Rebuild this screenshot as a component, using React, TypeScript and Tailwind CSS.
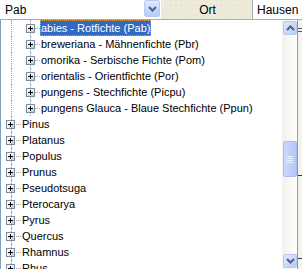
import React from "react";

const children = [
  "abies - Rotfichte (Pab)",
  "breweriana - Mähnenfichte (Pbr)",
  "omorika - Serbische Fichte (Pom)",
  "orientalis - Orientfichte (Por)",
  "pungens - Stechfichte (Picpu)",
  "pungens Glauca - Blaue Stechfichte (Ppun)",
];
const tops = [
  "Pinus",
  "Platanus",
  "Populus",
  "Prunus",
  "Pseudotsuga",
  "Pterocarya",
  "Pyrus",
  "Quercus",
  "Rhamnus",
  "Rhus",
];

function PlusBox() {
  return (
    <div className="relative w-[9px] h-[9px] border border-[#7b8da2] bg-gradient-to-br from-white via-[#f0efea] to-[#c2bfb2] shrink-0">
      <div className="absolute left-[1px] top-[3px] w-[5px] h-[1px] bg-black" />
      <div className="absolute left-[3px] top-[1px] w-[1px] h-[5px] bg-black" />
    </div>
  );
}

function ChildRow({ text, selected }: { text: string; selected?: boolean }) {
  return (
    <div className="relative h-[16px] flex items-center">
      <div className="absolute left-[10px] top-0 h-[16px] border-l border-dotted border-[#a0a0a0]" />
      <div className="absolute left-[29px] top-0 h-[16px] border-l border-dotted border-[#a0a0a0]" />
      <div className="absolute left-[34px] top-[8px] w-[5px] border-t border-dotted border-[#a0a0a0]" />
      <div className="ml-[25px] relative z-10">
        <PlusBox />
      </div>
      <div
        className={
          selected
            ? "ml-[5px] h-[16px] px-[1px] flex items-center bg-[#316ac5] text-white outline outline-1 outline-dotted outline-[#e0a040] -outline-offset-1"
            : "ml-[6px] h-[16px] flex items-center text-black"
        }
      >
        {text}
      </div>
    </div>
  );
}

function TopRow({ text }: { text: string }) {
  return (
    <div className="relative h-[16px] flex items-center">
      <div className="absolute left-[10px] top-0 h-[16px] border-l border-dotted border-[#a0a0a0]" />
      <div className="absolute left-[15px] top-[8px] w-[5px] border-t border-dotted border-[#a0a0a0]" />
      <div className="ml-[5px] relative z-10">
        <PlusBox />
      </div>
      <div className="ml-[7px] text-black">{text}</div>
    </div>
  );
}

function Chevron({ up }: { up?: boolean }) {
  return (
    <svg width="9" height="6" viewBox="0 0 9 6" className={up ? "" : "rotate-180"}>
      <path d="M1 5 L4.5 1.5 L8 5" fill="none" stroke="#4d6185" strokeWidth="2" />
    </svg>
  );
}

export default function App() {
  return (
    <div
      className="relative w-[302px] h-[269px] overflow-hidden bg-white text-[11px] leading-none"
      style={{ fontFamily: '"Liberation Sans", Arial, sans-serif' }}
    >
      {/* top bar */}
      <div className="flex h-[20px] border-b border-[#a5acb5]">
        <div className="w-[161px] flex items-center bg-white">
          <div className="flex-1 pl-[5px] text-[12px] text-black">Pab</div>
          <div className="w-[16px] h-[17px] mb-[2px] mr-[1px] rounded-[2px] border border-[#b7c9f0] bg-gradient-to-b from-[#dfe8fd] to-[#b8ccf7] flex items-center justify-center">
            <Chevron />
          </div>
        </div>
        <div className="flex-1 flex items-center justify-center bg-[#ece9d8] bg-[radial-gradient(#f8f7f0_0.6px,transparent_0.8px)] bg-[length:5px_5px] text-[12px] text-black pl-[2px]">
          Ort
        </div>
        <div className="w-[50px] border-l border-[#a5acb5] bg-white flex items-center pl-[4px] text-[12px] text-black">
          Hausen
        </div>
      </div>

      {/* list */}
      <div className="flex h-[249px]">
        <div className="flex-1 border-l border-[#7f9db9] overflow-hidden">
          {children.map((c, i) => (
            <ChildRow key={c} text={c} selected={i === 0} />
          ))}
          {tops.map((t) => (
            <TopRow key={t} text={t} />
          ))}
        </div>
        {/* scrollbar */}
        <div className="w-[16px] flex flex-col bg-gradient-to-r from-[#f3f1ec] to-[#fefefb] border-r border-[#7f9db9]">
          <div className="mt-[1px] ml-[1px] w-[14px] h-[14px] rounded-[2px] border border-[#b7c9f0] bg-gradient-to-br from-[#dfe8fd] to-[#b8ccf7] flex items-center justify-center">
            <Chevron up />
          </div>
          <div className="flex-1 relative">
            <div className="mt-[106px] ml-[1px] w-[14px] h-[36px] rounded-[2px] border border-[#a7bdf0] bg-gradient-to-r from-[#c9d8fc] to-[#b5c9f7] flex flex-col items-center justify-center gap-[1px]">
              <div className="w-[6px] h-[1px] bg-[#eef3ff]" />
              <div className="w-[6px] h-[1px] bg-[#eef3ff]" />
              <div className="w-[6px] h-[1px] bg-[#eef3ff]" />
              <div className="w-[6px] h-[1px] bg-[#eef3ff]" />
            </div>
          </div>
          <div className="mb-[1px] ml-[1px] w-[14px] h-[14px] rounded-[2px] border border-[#b7c9f0] bg-gradient-to-br from-[#dfe8fd] to-[#b8ccf7] flex items-center justify-center">
            <Chevron />
          </div>
        </div>
        {/* page behind */}
        <div className="w-[4px] bg-[#f4f3ee] flex flex-col">
          <div className="mt-[8px] h-[1px] bg-[#555]" />
          <div className="mt-[2px] h-[1px] bg-[#555]" />
          <div className="mt-[143px] h-[1px] bg-[#333]" />
          <div className="mt-[82px] h-[1px] bg-[#333]" />
        </div>
      </div>
    </div>
  );
}
